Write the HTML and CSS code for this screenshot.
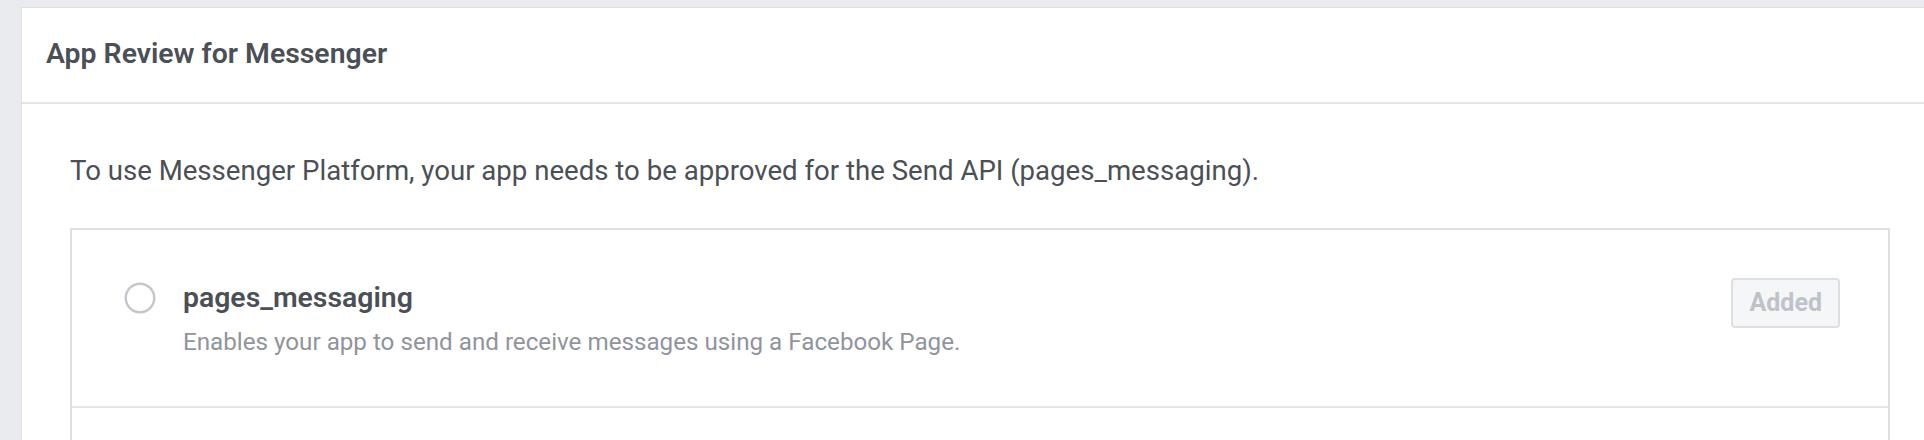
FILE: index.html
```html
<!DOCTYPE html>
<html lang="en">
<head>
<meta charset="utf-8">
<title>App Review for Messenger</title>
<link rel="stylesheet" href="styles.css">
</head>
<body>
<div class="card">
  <div class="card-header">
    <h2 class="card-title">App Review for Messenger</h2>
  </div>
  <div class="card-body">
    <p class="intro">To use Messenger Platform, your app needs to be approved for the Send API (pages_messaging).</p>
    <div class="perm-list">
      <div class="perm-row">
        <svg class="radio" width="32" height="32" viewBox="0 0 32 32" aria-hidden="true">
          <circle cx="16" cy="16" r="14.25" fill="#fff" stroke="#c4c7cc" stroke-width="2.5"/>
        </svg>
        <div class="perm-info">
          <div class="perm-name">pages_messaging</div>
          <div class="perm-desc">Enables your app to send and receive messages using a Facebook Page.</div>
        </div>
        <button class="btn-added" type="button" disabled>Added</button>
      </div>
      <div class="perm-row perm-row-empty"></div>
    </div>
  </div>
</div>
</body>
</html>
```
FILE: styles.css
```css
html, body {
  margin: 0;
  padding: 0;
}
body {
  background: #e9ebee;
  overflow: hidden;
  font-family: Roboto, "Liberation Sans", Arial, sans-serif;
  color: #4b4f56;
}
.card {
  box-sizing: border-box;
  width: 1918px;
  margin: 7px 0 0 21px;
  background: #fff;
  border: 1px solid #dddfe2;
}
.card-header {
  padding: 30px 24px 32px;
  border-bottom: 2px solid #e5e6e9;
}
.card-title {
  margin: 0;
  font-size: 28.4px;
  line-height: 32px;
  font-weight: 600;
  color: #4b4f56;
}
.card-body {
  padding: 49px 48px 0;
}
.intro {
  margin: 0 0 39px;
  font-size: 27.6px;
  line-height: 36px;
  color: #4b4f56;
}
.perm-list {
  border: 2px solid #dddfe2;
  border-bottom: 0;
}
.perm-row {
  display: flex;
  align-items: flex-start;
  padding: 48px 48px 49px;
}
.perm-row + .perm-row {
  border-top: 2px solid #e5e6e9;
}
.perm-row-empty {
  min-height: 120px;
}
.radio {
  flex: none;
  display: block;
  margin: 4px 27px 0 4px;
}
.perm-info {
  flex: 1;
  min-width: 0;
}
.perm-name {
  font-size: 28.4px;
  line-height: 40px;
  font-weight: 600;
  color: #4b4f56;
}
.perm-desc {
  margin-top: 9px;
  font-size: 24.2px;
  line-height: 30px;
  color: #90949c;
}
.btn-added {
  flex: none;
  margin-left: auto;
  box-sizing: border-box;
  height: 50px;
  padding: 0 16px;
  border: 2px solid #dddfe2;
  border-radius: 4px;
  background: #f5f6f7;
  color: #bec3c9;
  font-family: Roboto, "Liberation Sans", Arial, sans-serif;
  font-size: 25px;
  line-height: 46px;
  font-weight: 700;
}
```
